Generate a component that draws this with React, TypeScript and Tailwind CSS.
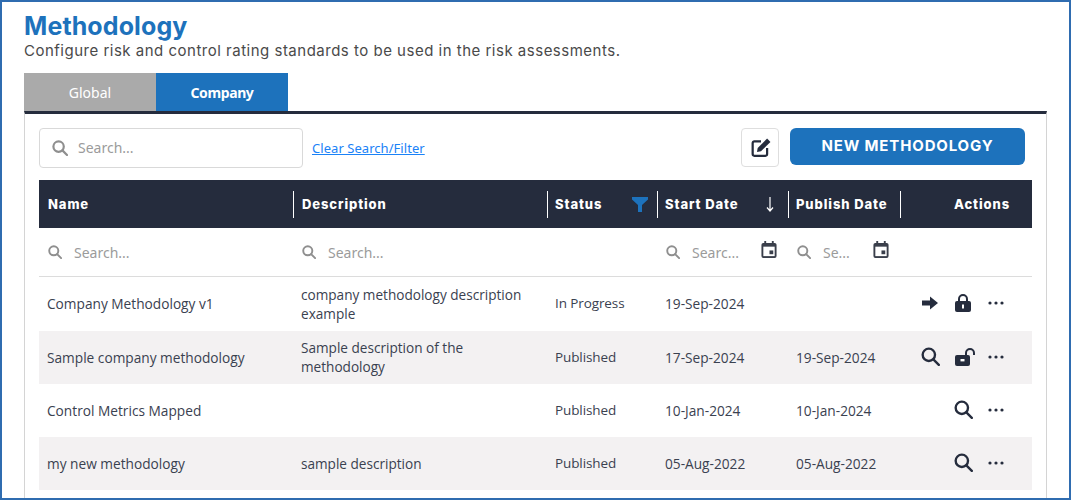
import React from "react";

const NavyText = "text-[#252c3d]";
const cols = "grid grid-cols-[254px_254px_110px_131px_112px_132px]";
const headCols = "grid grid-cols-[255px_254px_110px_131px_112px_131px]";
const gotham = "font-['Inter','Liberation_Sans',sans-serif]";

function SearchIcon({ size = 16, color = "#8f8f8f", sw = 2.6 }: { size?: number; color?: string; sw?: number }) {
  return (
    <svg width={size} height={size} viewBox="0 0 16 16" fill="none" stroke={color} strokeWidth={sw} className="shrink-0">
      <circle cx="6.6" cy="6.6" r="5.2" />
      <path d="M10.4 10.4 15 15" strokeLinecap="round" />
    </svg>
  );
}

function Calendar() {
  return (
    <svg width="16" height="17" viewBox="0 0 16 18" className="shrink-0">
      <path fill="#3a3f4b" d="M3 0h2v2h6V0h2v2h1a2 2 0 0 1 2 2v12a2 2 0 0 1-2 2H2a2 2 0 0 1-2-2V4a2 2 0 0 1 2-2h1z" />
      <rect x="2" y="6" width="12" height="10" fill="#fff" />
      <rect x="8.5" y="10" width="4" height="4" fill="#3a3f4b" />
    </svg>
  );
}

function Dots() {
  return (
    <svg width="16" height="4" viewBox="0 0 16 4" className="shrink-0">
      <circle cx="2" cy="2" r="1.6" fill="#252c3d" />
      <circle cx="8" cy="2" r="1.6" fill="#252c3d" />
      <circle cx="14" cy="2" r="1.6" fill="#252c3d" />
    </svg>
  );
}

function Arrow() {
  return (
    <svg width="16" height="14" viewBox="0 0 16 14" className="shrink-0">
      <path fill="#252c3d" d="M0 4.4h8V0.6L16 7l-8 6.4V9.6H0z" />
    </svg>
  );
}

function Lock() {
  return (
    <svg width="16" height="18" viewBox="0 0 16 18" className="shrink-0">
      <path fill="none" stroke="#252c3d" strokeWidth="2" d="M4 8V5a4 4 0 0 1 8 0v3" />
      <rect x="0" y="7" width="16" height="11" rx="2" fill="#252c3d" />
      <rect x="7" y="10.5" width="2" height="4" fill="#fff" />
    </svg>
  );
}

function Unlock() {
  return (
    <svg width="20" height="18" viewBox="0 0 20 18" className="shrink-0">
      <path fill="none" stroke="#252c3d" strokeWidth="2" d="M11 8V5a4 4 0 0 1 8 0v2" />
      <rect x="0" y="7" width="15" height="11" rx="2" fill="#252c3d" />
      <rect x="5.5" y="11" width="4" height="2.4" fill="#fff" />
    </svg>
  );
}

function HeaderCell({ label, children }: { label: string; children?: React.ReactNode }) {
  return (
    <div className="flex items-center justify-between h-[27px] pl-[7px] pr-[9px] border-r border-white">
      <span className="whitespace-nowrap pt-[1px]">{label}</span>
      {children}
    </div>
  );
}

function FilterInput({ text, cal }: { text?: string; cal?: boolean }) {
  return (
    <div className="flex items-center pl-[9px] pr-[11px] justify-between">
      {text && (
        <div className="flex items-center gap-3">
          <SearchIcon size={14} sw={2.2} />
          <span className="text-[14px] text-[#9b9b9b] font-['Noto_Sans',sans-serif]">{text}</span>
        </div>
      )}
      {cal && <div className="-mt-[5px]"><Calendar /></div>}
    </div>
  );
}

const rows = [
  { name: "Company Methodology v1", desc: "company methodology description example", status: "In Progress", start: "19-Sep-2024", pub: "", actions: "arrowlock", h: "h-[54px]", bg: "" },
  { name: "Sample company methodology", desc: "Sample description of the methodology", status: "Published", start: "17-Sep-2024", pub: "19-Sep-2024", actions: "searchunlock", h: "h-[53px]", bg: "bg-[#f3f1f2]" },
  { name: "Control Metrics Mapped", desc: "", status: "Published", start: "10-Jan-2024", pub: "10-Jan-2024", actions: "search", h: "h-[53px]", bg: "" },
  { name: "my new methodology", desc: "sample description", status: "Published", start: "05-Aug-2022", pub: "05-Aug-2022", actions: "search", h: "h-[53px]", bg: "bg-[#f3f1f2]" },
];

function Actions({ kind }: { kind: string }) {
  return (
    <div className="flex items-center justify-end pr-[28px] -mt-[3px]">
      {kind === "arrowlock" && (
        <>
          <Arrow />
          <div className="ml-[17px] mr-[17px]"><Lock /></div>
        </>
      )}
      {kind === "searchunlock" && (
        <>
          <SearchIcon size={19} color="#252c3d" sw={2} />
          <div className="ml-[15px] mr-[13px]"><Unlock /></div>
        </>
      )}
      {kind === "search" && (
        <div className="mr-[15px]"><SearchIcon size={19} color="#252c3d" sw={2} /></div>
      )}
      <Dots />
    </div>
  );
}

export default function App() {
  return (
    <div className={`w-[1071px] h-[500px] overflow-hidden bg-white border-2 border-[#2f6cb0] font-['Noto_Sans',sans-serif] ${NavyText}`}>
      <div className="pl-[22px] pr-[22px] pt-[9px]">
        <h1 className="text-[25px] leading-[30px] font-bold text-[#1d72bc] font-['Inter',sans-serif] tracking-[0.1px]">Methodology</h1>
        <p className="text-[15px] leading-[20px] text-[#4a4a4a] font-['Inter',sans-serif] tracking-[0.5px]">Configure risk and control rating standards to be used in the risk assessments.</p>
        <div className="flex mt-[12px] font-['Noto_Sans',sans-serif] text-[14px]">
          <div className="w-[132px] h-[38px] bg-[#aaaaaa] text-white flex items-center justify-center">Global</div>
          <div className="w-[132px] h-[38px] bg-[#1d72bc] text-white font-bold tracking-[-0.4px] flex items-center justify-center">Company</div>
        </div>
        <div className="border-t-[3px] border-[#252c3d] border-l border-l-[#d4d4d4] border-r border-r-[#d4d4d4] w-[1023px] h-[400px] pl-[14px] pr-[14px]">
          <div className="flex items-start h-[66px] pt-[14px]">
            <div className="w-[264px] h-[40px] border border-[#d9d9d9] rounded-[4px] flex items-center pl-[12px] gap-[10px]">
              <SearchIcon size={16} sw={2.2} />
              <span className="text-[14px] text-[#9b9b9b] pb-[2px]">Search...</span>
            </div>
            <a className="ml-[9px] mt-[11px] text-[13px] tracking-[0.05px] underline text-[#1a82f7]">Clear Search/Filter</a>
            <div className="ml-auto w-[38px] h-[39px] border border-[#dedede] rounded-[4px] flex items-center justify-center">
              <svg width="20" height="20" viewBox="0 0 18 18" className="ml-[2px]">
                <path fill="none" stroke="#252c3d" strokeWidth="2" d="M9 3H3a1.5 1.5 0 0 0-1.5 1.5v10A1.5 1.5 0 0 0 3 16h10a1.5 1.5 0 0 0 1.5-1.5V9" />
                <path fill="#252c3d" d="M14.5 0.5l3 3L9 12l-3.6.6L6 9z" />
              </svg>
            </div>
            <button className={`ml-[11px] mr-[7px] w-[235px] h-[37px] rounded-[6px] bg-[#1d72bc] text-white text-[15px] font-bold tracking-[0.85px] ${gotham}`}>NEW METHODOLOGY</button>
          </div>
          <div className={`w-[993px] ${headCols} h-[48px] items-center bg-[#252c3d] text-white text-[13px] font-extrabold tracking-[0.9px] ${gotham}`}>
            <div className="pl-[2px]"><HeaderCell label="Name" /></div>
            <div className="pl-[1px]"><HeaderCell label="Description" /></div>
            <HeaderCell label="Status">
              <svg width="16" height="15" viewBox="0 0 16 15"><path fill="#1d72bc" d="M0 0h16v2.5L10 8v7H6V8L0 2.5z" /></svg>
            </HeaderCell>
            <HeaderCell label="Start Date">
              <svg width="8" height="15" viewBox="0 0 8 15" className="mr-[5px]"><path fill="none" stroke="#fff" strokeWidth="1.2" d="M4 0v14M1 10.5L4 14l3-3.5" /></svg>
            </HeaderCell>
            <HeaderCell label="Publish Date" />
            <div className="text-right pr-[22px] pt-[1px]">Actions</div>
          </div>
          <div className={`w-[993px] ${cols} h-[49px] items-center border-b border-[#dcdcdc]`}>
            <FilterInput text="Search..." />
            <FilterInput text="Search..." />
            <div />
            <FilterInput text="Searc..." cal />
            <FilterInput text="Se..." cal />
            <div />
          </div>
          {rows.map((r) => (
            <div key={r.name} className={`w-[993px] ${cols} ${r.h} ${r.bg} items-center text-[13.7px] leading-[19px] text-[#3a4150] pt-[1px] font-['Open_Sans',sans-serif]`}>
              <div className="pl-[8px] -mt-[2px] whitespace-nowrap">{r.name}</div>
              <div className="pl-[8px] pr-[8px] -mt-[2px] text-[13.6px]">{r.desc}</div>
              <div className="pl-[8px] tracking-[-0.1px] text-[13.5px] -mt-[2px]">{r.status}</div>
              <div className="pl-[8px] -mt-[2px]">{r.start}</div>
              <div className="pl-[8px] -mt-[2px]">{r.pub}</div>
              <Actions kind={r.actions} />
            </div>
          ))}
        </div>
      </div>
    </div>
  );
}
